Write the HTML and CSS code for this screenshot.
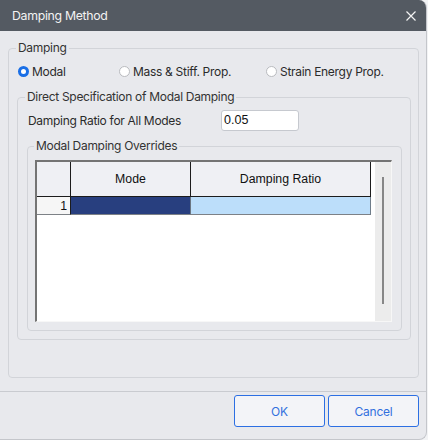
FILE: index.html
```html
<!DOCTYPE html>
<html>
<head>
<meta charset="utf-8">
<title>Damping Method</title>
<link rel="stylesheet" href="styles.css">
</head>
<body>
<div class="window">
  <div class="titlebar">
    <span class="title">Damping Method</span>
    <svg class="close" width="10" height="10" viewBox="0 0 10 10"><path d="M0.5 0.5 L9.5 9.5 M9.5 0.5 L0.5 9.5" stroke="#f4f4f4" stroke-width="1.2" fill="none"/></svg>
  </div>
  <div class="content">
    <fieldset class="fs fs-damping">
      <legend>Damping</legend>
      <div class="radios">
        <label class="radio"><span class="dot on"></span>Modal</label>
        <label class="radio"><span class="dot"></span>Mass &amp; Stiff. Prop.</label>
        <label class="radio"><span class="dot"></span>Strain Energy Prop.</label>
      </div>
      <fieldset class="fs fs-direct">
        <legend>Direct Specification of Modal Damping</legend>
        <div class="ratio-row">
          <span class="ratio-label">Damping Ratio for All Modes</span>
          <div class="input">0.05</div>
        </div>
        <fieldset class="fs fs-over">
          <legend>Modal Damping Overrides</legend>
          <div class="grid">
            <div class="cells">
              <div class="row head">
                <div class="cell rh"></div>
                <div class="cell">Mode</div>
                <div class="cell">Damping Ratio</div>
              </div>
              <div class="row data">
                <div class="cell rh num">1</div>
                <div class="cell sel"></div>
                <div class="cell cur"></div>
              </div>
            </div>
            <div class="gapcol"></div>
            <div class="scroll"><div class="thumb"></div></div>
          </div>
        </fieldset>
      </fieldset>
    </fieldset>
  </div>
  <div class="footer">
    <button class="btn">OK</button>
    <button class="btn">Cancel</button>
  </div>
</div>
</body>
</html>
```
FILE: styles.css
```css
html, body {
  margin: 0;
  padding: 0;
  background: #f2f3f5;
}
body {
  font-family: Inter, "Noto Sans", sans-serif;
  font-size: 12px;
  letter-spacing: -0.3px;
  color: #2b2b2b;
}
.window {
  width: 427px;
  height: 440px;
  box-sizing: border-box;
  background: #e8e9ed;
  border-right: 1px solid #c4c6cb;
  border-bottom: 1px solid #c4c6cb;
  border-radius: 0 8px 8px 0;
  overflow: hidden;
  display: flex;
  flex-direction: column;
}
.titlebar {
  height: 31px;
  flex: none;
  background: #545a62;
  color: #f3f3f3;
  display: flex;
  align-items: center;
  justify-content: space-between;
  padding: 0 10px 0 12px;
  font-size: 12.3px;
}
.close { display: block; margin-top: 1px; }
.content {
  padding: 9px 0 0 8px;
}
.fs {
  margin: 0;
  border: 1px solid #d2d4d9;
  border-radius: 4px;
  min-width: 0;
  box-sizing: border-box;
}
.fs legend {
  padding: 0 2px;
  line-height: 16px;
  font-size: 12px;
  color: #333;
}
.fs-damping {
  width: 411px;
  padding: 7px 7px 37px 8px;
}
.fs-damping > legend { margin-left: -1px; }
.radios {
  display: grid;
  grid-template-columns: 101px 147px auto;
  height: 16px;
  align-items: center;
  margin-left: 1px;
}
.radio {
  display: flex;
  align-items: center;
  white-space: nowrap;
}
.dot {
  width: 11px;
  height: 11px;
  box-sizing: border-box;
  border-radius: 50%;
  background: #fff;
  border: 1px solid #b9bbbf;
  margin-right: 3px;
  flex: none;
}
.dot.on {
  border: 3px solid #1a6fe6;
}
.fs-direct {
  margin-top: 10px;
  width: 394px;
  padding: 5px 8px 8px 9px;
}
.fs-direct > legend { margin-left: -2px; }
.ratio-row {
  display: flex;
  align-items: center;
  height: 21px;
}
.ratio-label {
  width: 194px;
  margin-left: 1px;
  flex: none;
}
.input {
  width: 78px;
  height: 21px;
  box-sizing: border-box;
  margin-left: -1px;
  background: #fff;
  border: 1px solid #c6c9cf;
  border-radius: 3px;
  font-family: "Liberation Sans", Arial, sans-serif;
  font-size: 12.5px;
  letter-spacing: 0;
  color: #111;
  line-height: 19px;
  padding-left: 2px;
}
.fs-over {
  margin-top: 7px;
  width: 375px;
  padding: 6px 9px 8px 7px;
}
.fs-over > legend { margin-left: -1px; }
.grid {
  width: 357px;
  height: 162px;
  box-sizing: border-box;
  border-top: 2px solid #747474;
  border-left: 2px solid #747474;
  border-right: 1px solid #f7f7f7;
  border-bottom: 1px solid #f7f7f7;
  background: #fff;
  display: flex;
  font-family: "Liberation Sans", Arial, sans-serif;
  font-size: 12.3px;
  letter-spacing: 0;
  color: #111;
}
.cells { width: 334px; flex: none; }
.row {
  display: grid;
  grid-template-columns: 34px 120px 180px;
}
.cell {
  box-sizing: border-box;
  border-right: 1px solid #1c1c1c;
  border-bottom: 1px solid #1c1c1c;
  display: flex;
  align-items: center;
  justify-content: center;
}
.head .cell {
  height: 35px;
  background: #eff0f4;
}
.data .cell {
  height: 18px;
  border-bottom-color: #7d8186;
}
.data .num {
  background: #f6f6f6;
  justify-content: flex-end;
  padding-right: 3px;
  border-right-color: #1c1c1c;
}
.data .sel {
  background: #283f7f;
  border-right-color: #6b7682;
}
.data .cur {
  background: #bcdefa;
  border-right-color: #6f7d8a;
}
.gapcol { width: 4px; flex: none; }
.scroll {
  width: 16px;
  flex: none;
  background: #ececec;
  position: relative;
}
.thumb {
  position: absolute;
  left: 7px;
  top: 15px;
  width: 2px;
  height: 127px;
  background: #878787;
}
.footer {
  margin-top: 13px;
  border-top: 1px solid #c9cbd0;
  padding: 3px 7px 0 0;
  display: flex;
  justify-content: flex-end;
  gap: 3px;
}
.btn {
  width: 91px;
  height: 32px;
  box-sizing: border-box;
  border: 1px solid #2c6fe3;
  border-radius: 3px;
  background: #f3f4f8;
  color: #3270de;
  font-family: Inter, "Noto Sans", sans-serif;
  font-size: 12px;
  letter-spacing: -0.2px;
  padding: 0;
}
```
